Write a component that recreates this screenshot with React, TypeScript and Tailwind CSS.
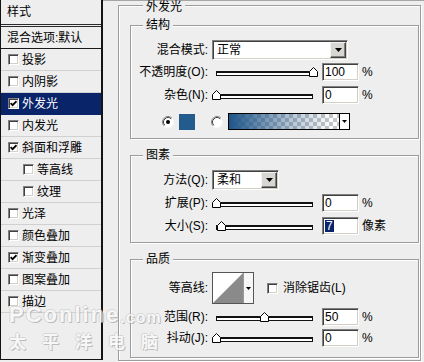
import React from "react";

const font = "font-['Liberation_Sans','Noto_Sans_CJK_SC',sans-serif]";
const sunken =
  "border border-t-[#808080] border-l-[#808080] border-r-white border-b-white shadow-[inset_1px_1px_0_#404040,inset_-1px_-1px_0_#d4d0c8]";

const Arrow = ({ small = false }: { small?: boolean }) =>
  small ? (
    <svg width="5" height="3" viewBox="0 0 5 3">
      <path d="M0 0H5L2.5 3Z" fill="#000" />
    </svg>
  ) : (
    <svg width="7" height="4" viewBox="0 0 7 4">
      <path d="M0 0H7L3.5 4Z" fill="#000" />
    </svg>
  );

const CheckBox = ({ checked = false }: { checked?: boolean }) => (
  <span className={`flex h-[11px] w-[11px] shrink-0 items-center justify-center bg-white ${sunken}`}>
    {checked && (
      <svg width="7" height="7" viewBox="0 0 7 7">
        <path d="M0.6 3.2 L2.6 5.2 L6.5 1.2" fill="none" stroke="#000" strokeWidth="1.8" />
      </svg>
    )}
  </span>
);

const Radio = ({ on = false }: { on?: boolean }) => (
  <svg width="12" height="12" viewBox="0 0 12 12" className="shrink-0">
    <circle cx="6" cy="6" r="5.5" fill="#fff" stroke="#fafafa" />
    <path d="M2.11 9.89 A5.5 5.5 0 0 1 9.89 2.11" fill="none" stroke="#808080" />
    <path d="M2.82 9.18 A4.5 4.5 0 0 1 9.18 2.82" fill="none" stroke="#404040" />
    {on && <circle cx="6" cy="6" r="2" fill="#000" />}
  </svg>
);

const Select = ({ value, className }: { value: string; className: string }) => (
  <div className={`flex h-[20px] items-stretch bg-white p-[1px] ${sunken} ${className}`}>
    <span className="flex flex-1 items-center pl-[3px]">{value}</span>
    <span className="flex w-[16px] items-center justify-center border border-t-[#f4f4f4] border-l-[#f4f4f4] border-r-[#404040] border-b-[#404040] bg-[#d8d6d2] shadow-[inset_-1px_-1px_0_#808080]">
      <Arrow />
    </span>
  </div>
);

const Slider = ({ pct }: { pct: number }) => (
  <div className="relative ml-[4px] flex h-[10px] w-[97px] items-end pb-[1px]">
    <div className="h-[5px] w-full border border-t-2 border-[#111] bg-white" />
    <svg
      width="9"
      height="10"
      viewBox="0 0 9 10"
      className="absolute top-0"
      style={{ left: `calc(${pct}% - 4.5px)` }}
    >
      <path d="M0.5 9.5V4.5L4.5 0.5L8.5 4.5V9.5Z" fill="#fff" stroke="#000" />
    </svg>
  </div>
);

const Field = ({ value, selected = false }: { value: string; selected?: boolean }) => (
  <div className={`ml-[9px] flex h-[18px] w-[37px] items-center bg-white p-[1px] pl-[2px] leading-none ${sunken}`}>
    {selected ? <span className="bg-[#0a246a] px-[1px] text-white">{value}</span> : value}
  </div>
);

const Unit = ({ children }: { children: React.ReactNode }) => (
  <span className="ml-[3px]">{children}</span>
);

const Row = ({
  label,
  className,
  children,
}: {
  label: string;
  className: string;
  children: React.ReactNode;
}) => (
  <div className={`flex items-center ${className}`}>
    <div className="w-[77px] shrink-0 text-right">{label}</div>
    <div className="ml-[4px] flex items-center">{children}</div>
  </div>
);

const Group = ({
  title,
  className,
  children,
}: {
  title: string;
  className: string;
  children: React.ReactNode;
}) => (
  <div className={`border border-[#9c9c9c] shadow-[1px_1px_0_#fff,inset_1px_1px_0_#fff] ${className}`}>
    <div className="-mt-[7px] ml-[12px] w-fit bg-[#eeeeee] px-[3px] leading-[12px]">{title}</div>
    {children}
  </div>
);

const Contour = () => (
  <div className="flex h-[32px] w-[42px] border border-[#555] bg-white">
    <svg width="30" height="30" viewBox="0 0 30 30" className="shrink-0">
      <path d="M0 30 L30 0 L30 30 Z" fill="#8a8a8a" />
    </svg>
    <div className="flex flex-1 items-center justify-center border-l border-[#9a9a9a] bg-[#f6f6f6]">
      <Arrow small />
    </div>
  </div>
);

const styles = [
  { label: "投影" },
  { label: "内阴影" },
  { label: "外发光", checked: true, selected: true },
  { label: "内发光" },
  { label: "斜面和浮雕", checked: true },
  { label: "等高线", indent: true },
  { label: "纹理", indent: true },
  { label: "光泽" },
  { label: "颜色叠加" },
  { label: "渐变叠加", checked: true },
  { label: "图案叠加" },
  { label: "描边" },
];

const LeftPanel = () => (
  <div className="flex h-[360px] w-[103px] shrink-0 flex-col border-b border-l border-r-2 border-[#141414]">
    <div className="flex h-[24px] items-center pl-[6px]">样式</div>
    <div className="h-[3px] border-y border-[#2a2a2a]" />
    <div className="flex h-[22px] items-center border-b border-[#1a1a1a] pl-[6px]">混合选项:默认</div>
    {styles.map((s) => (
      <div
        key={s.label}
        className={`flex h-[22px] items-center border-b ${s.indent ? "pl-[22px]" : "pl-[7px]"} ${
          s.selected ? "border-[#0a246a] bg-[#0a246a] text-white" : "border-[#d0d0d0]"
        }`}
      >
        <CheckBox checked={s.checked} />
        <span className="ml-[3px]">{s.label}</span>
      </div>
    ))}
  </div>
);

export default function App() {
  return (
    <div className={`relative flex h-[362px] w-[424px] overflow-hidden bg-[#eeeeee] text-[12px] text-black ${font}`}>
      <LeftPanel />
      <div className="flex flex-1 flex-col border-t border-[#a5a5a5] pl-[15px] pr-[3px] pt-[4px]">
        <div className="border border-[#9c9c9c] pb-[2px] pl-[11px] pr-[1px] shadow-[1px_1px_0_#fff,inset_1px_1px_0_#fff]">
          <div className="-mt-[5px] ml-[13px] w-fit bg-[#eeeeee] px-[3px] leading-[12px]">外发光</div>

          <Group title="结构" className="mt-[12px] pb-[8px]">
            <Row label="混合模式:" className="mt-[9px] h-[20px]">
              <Select value="正常" className="w-[136px]" />
            </Row>
            <Row label="不透明度(O):" className="mt-[3px] h-[18px]">
              <Slider pct={100} />
              <Field value="100" />
              <Unit>%</Unit>
            </Row>
            <Row label="杂色(N):" className="mt-[5px] h-[18px]">
              <Slider pct={0} />
              <Field value="0" />
              <Unit>%</Unit>
            </Row>
            <div className="mt-[9px] flex h-[17px] items-center pl-[31px]">
              <Radio on />
              <div className="ml-[5px] h-[16px] w-[16px] bg-[#245b8d]" />
              <div className="ml-[16px] flex">
                <Radio />
              </div>
              <div className="ml-[5px] flex h-[17px] w-[122px] border border-black">
                <div className="flex-1 bg-[linear-gradient(to_right,#1e5588,rgba(30,85,136,0.35)_55%,rgba(30,85,136,0)_95%),repeating-conic-gradient(#c6c6c6_0%_25%,#ffffff_0%_50%)] bg-[length:100%_100%,8px_8px]" />
                <div className="flex w-[10px] items-center justify-center border-l border-black bg-white">
                  <Arrow small />
                </div>
              </div>
            </div>
          </Group>

          <Group title="图素" className="mt-[16px] pb-[7px]">
            <Row label="方法(Q):" className="mt-[9px] h-[20px]">
              <Select value="柔和" className="w-[67px]" />
            </Row>
            <Row label="扩展(P):" className="mt-[4px] h-[18px]">
              <Slider pct={0} />
              <Field value="0" />
              <Unit>%</Unit>
            </Row>
            <Row label="大小(S):" className="mt-[5px] h-[18px]">
              <Slider pct={6} />
              <Field value="7" selected />
              <Unit>像素</Unit>
            </Row>
          </Group>

          <Group title="品质" className="mt-[16px] pb-[10px]">
            <Row label="等高线:" className="mt-[7px] h-[32px]">
              <Contour />
              <span className="ml-[13px] flex">
                <CheckBox />
              </span>
              <span className="ml-[5px]">消除锯齿(L)</span>
            </Row>
            <Row label="范围(R):" className="mt-[4px] h-[18px]">
              <Slider pct={50} />
              <Field value="50" />
              <Unit>%</Unit>
            </Row>
            <Row label="抖动(J):" className="mt-[3px] h-[18px]">
              <Slider pct={0} />
              <Field value="0" />
              <Unit>%</Unit>
            </Row>
          </Group>
        </div>
      </div>

      {/* watermark */}
      <div className="pointer-events-none absolute left-[9px] top-[304px] font-bold text-[#fbfbfb] opacity-70 [text-shadow:1px_1px_0_#a8a8a8,-1px_0_0_#cccccc,0_-1px_0_#cccccc]">
        <div className="flex items-end leading-none">
          <span className="text-[22px] tracking-[2px]">PConline</span>
          <span className="text-[16px] tracking-[1px]">.com</span>
        </div>
        <div className="mt-[6px] font-['Noto_Sans_CJK_SC',sans-serif] text-[17px] leading-none tracking-[16px]">
          太平洋电脑
        </div>
      </div>
    </div>
  );
}
